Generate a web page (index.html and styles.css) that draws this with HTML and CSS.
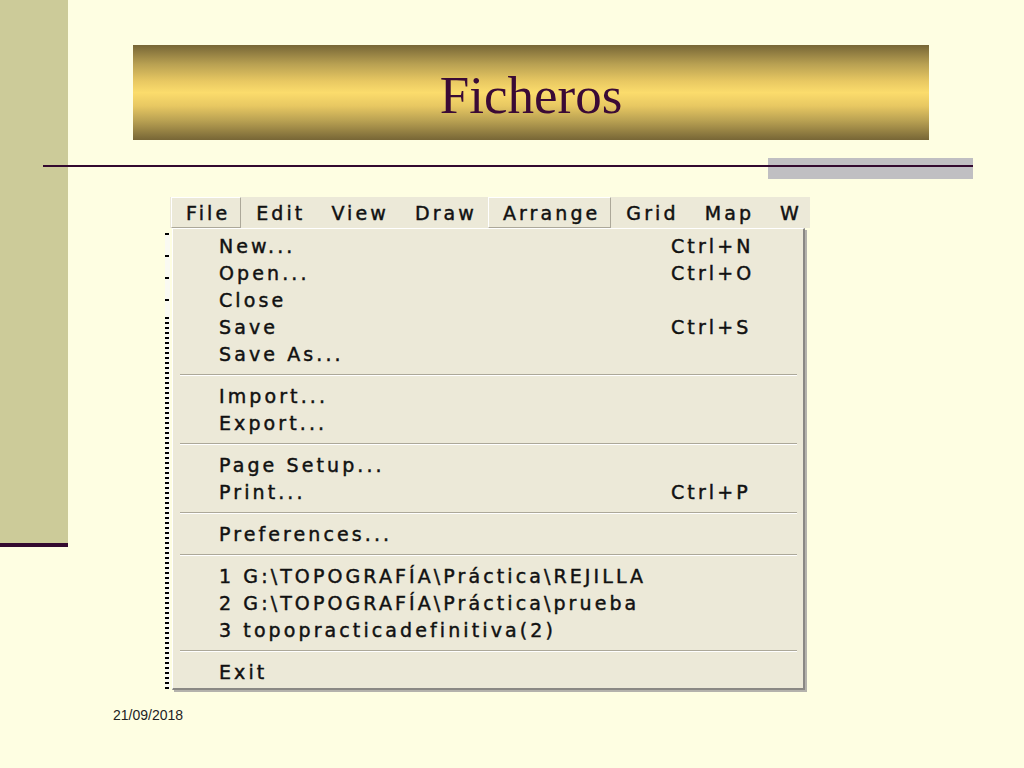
FILE: index.html
```html
<!DOCTYPE html>
<html lang="es">
<head>
  <meta charset="UTF-8" />
  <title>Ficheros</title>
  <link rel="stylesheet" href="styles.css">
</head>
<body>

<div class="slide">
  <div class="sidebar"></div>

  <div class="main">
    <div class="title-bar">
      <h1>Ficheros</h1>
    </div>
    <div class="rule"></div>

    <div class="shot">
      <div class="ruler"></div>
      <div class="app">
        <div class="menubar">
          <span class="menu-title raised">File</span>
          <span class="menu-title">Edit</span>
          <span class="menu-title">View</span>
          <span class="menu-title">Draw</span>
          <span class="menu-title raised">Arrange</span>
          <span class="menu-title">Grid</span>
          <span class="menu-title">Map</span>
          <span class="menu-title cut">W</span>
        </div>

        <div class="dropdown">
          <div class="item"><span>New...</span><span>Ctrl+N</span></div>
          <div class="item"><span>Open...</span><span>Ctrl+O</span></div>
          <div class="item"><span>Close</span></div>
          <div class="item"><span>Save</span><span>Ctrl+S</span></div>
          <div class="item"><span>Save As...</span></div>
          <div class="sep"></div>
          <div class="item"><span>Import...</span></div>
          <div class="item"><span>Export...</span></div>
          <div class="sep"></div>
          <div class="item"><span>Page Setup...</span></div>
          <div class="item"><span>Print...</span><span>Ctrl+P</span></div>
          <div class="sep"></div>
          <div class="item"><span>Preferences...</span></div>
          <div class="sep"></div>
          <div class="item"><span>1 G:\TOPOGRAFÍA\Práctica\REJILLA</span></div>
          <div class="item"><span>2 G:\TOPOGRAFÍA\Práctica\prueba</span></div>
          <div class="item"><span>3 topopracticadefinitiva(2)</span></div>
          <div class="sep"></div>
          <div class="item"><span>Exit</span></div>
        </div>
      </div>
    </div>

    <div class="date">21/09/2018</div>
  </div>
</div>

</body>
</html>
```

FILE: styles.css
```css
body {
  margin: 0;
  background-color: #fefee2;
  font-family: "Liberation Sans", Arial, sans-serif;
  width: 1024px;
  height: 768px;
  overflow: hidden;
}

.slide {
  display: flex;
  align-items: flex-start;
}

.sidebar {
  width: 68px;
  height: 543px;
  background-color: #cccb99;
  border-bottom: 4px solid #33092f;
  flex-shrink: 0;
}

.main {
  flex: 1;
}

.title-bar {
  margin: 45px 0 0 65px;
  width: 796px;
  height: 95px;
  background: linear-gradient(#776636 0%, #b8a052 20%, #e8c862 38%, #fbdc6c 50%, #e8c862 64%, #b8a052 80%, #776636 100%);
  display: flex;
  justify-content: center;
  align-items: center;
}

h1 {
  margin: 0;
  font-family: "Liberation Serif", "Times New Roman", serif;
  font-weight: normal;
  font-size: 53px;
  color: #3a0a36;
  position: relative;
  top: 2px;
}

.rule {
  margin: 18px 0 0 -25px;
  width: 930px;
  height: 21px;
  background:
    linear-gradient(#33092f, #33092f) 0 7px / 100% 2px no-repeat,
    linear-gradient(#c0bfc2, #c0bfc2) right 0 / 205px 21px no-repeat;
}

.shot {
  margin: 18px 0 0 97px;
  width: 645px;
  display: flex;
}

.ruler {
  width: 5px;
  margin-top: 36px;
  height: 456px;
  background:
    repeating-linear-gradient(#000 0 2px, transparent 2px 5px) 0 84px / 4px 372px no-repeat,
    repeating-linear-gradient(#000 0 2px, transparent 2px 22px) 0 0 / 4px 84px no-repeat;
  background-color: #fafaf2;
}

.app {
  flex: 1;
  font-family: "DejaVu Sans", Verdana, sans-serif;
  font-size: 19px;
  letter-spacing: 3.1px;
  -webkit-text-stroke: 0.45px #111;
  color: #111;
}

.menubar {
  height: 31px;
  background-color: #ece9d8;
  display: flex;
  align-items: stretch;
  padding-left: 1px;
  overflow: hidden;
}

.menu-title {
  padding: 0 10px 0 14px;
  display: flex;
  align-items: center;
  border: 1px solid transparent;
}

.menu-title.raised {
  border-color: #fff #aca899 #aca899 #fff;
}

.menu-title.cut {
  padding-right: 0;
}

.dropdown {
  margin-left: 2px;
  width: 630px;
  background-color: #ece9d8;
  border-top: 1px solid #fff;
  border-left: 1px solid #fff;
  border-right: 2px solid #8a8884;
  border-bottom: 2px solid #8a8884;
  box-shadow: 2px 2px 0 #b4b2ac;
  padding: 3px 0 3px;
}

.item {
  height: 27px;
  display: grid;
  grid-template-columns: 452px auto;
  align-items: center;
  padding-left: 46px;
}

.sep {
  height: 15px;
  margin: 0 6px 0 7px;
  background:
    linear-gradient(#aca899, #aca899) 0 7px / 100% 1px no-repeat,
    linear-gradient(#fff, #fff) 0 8px / 100% 1px no-repeat;
}

.date {
  margin: 17px 0 0 45px;
  font-size: 14px;
  color: #222;
}
```
